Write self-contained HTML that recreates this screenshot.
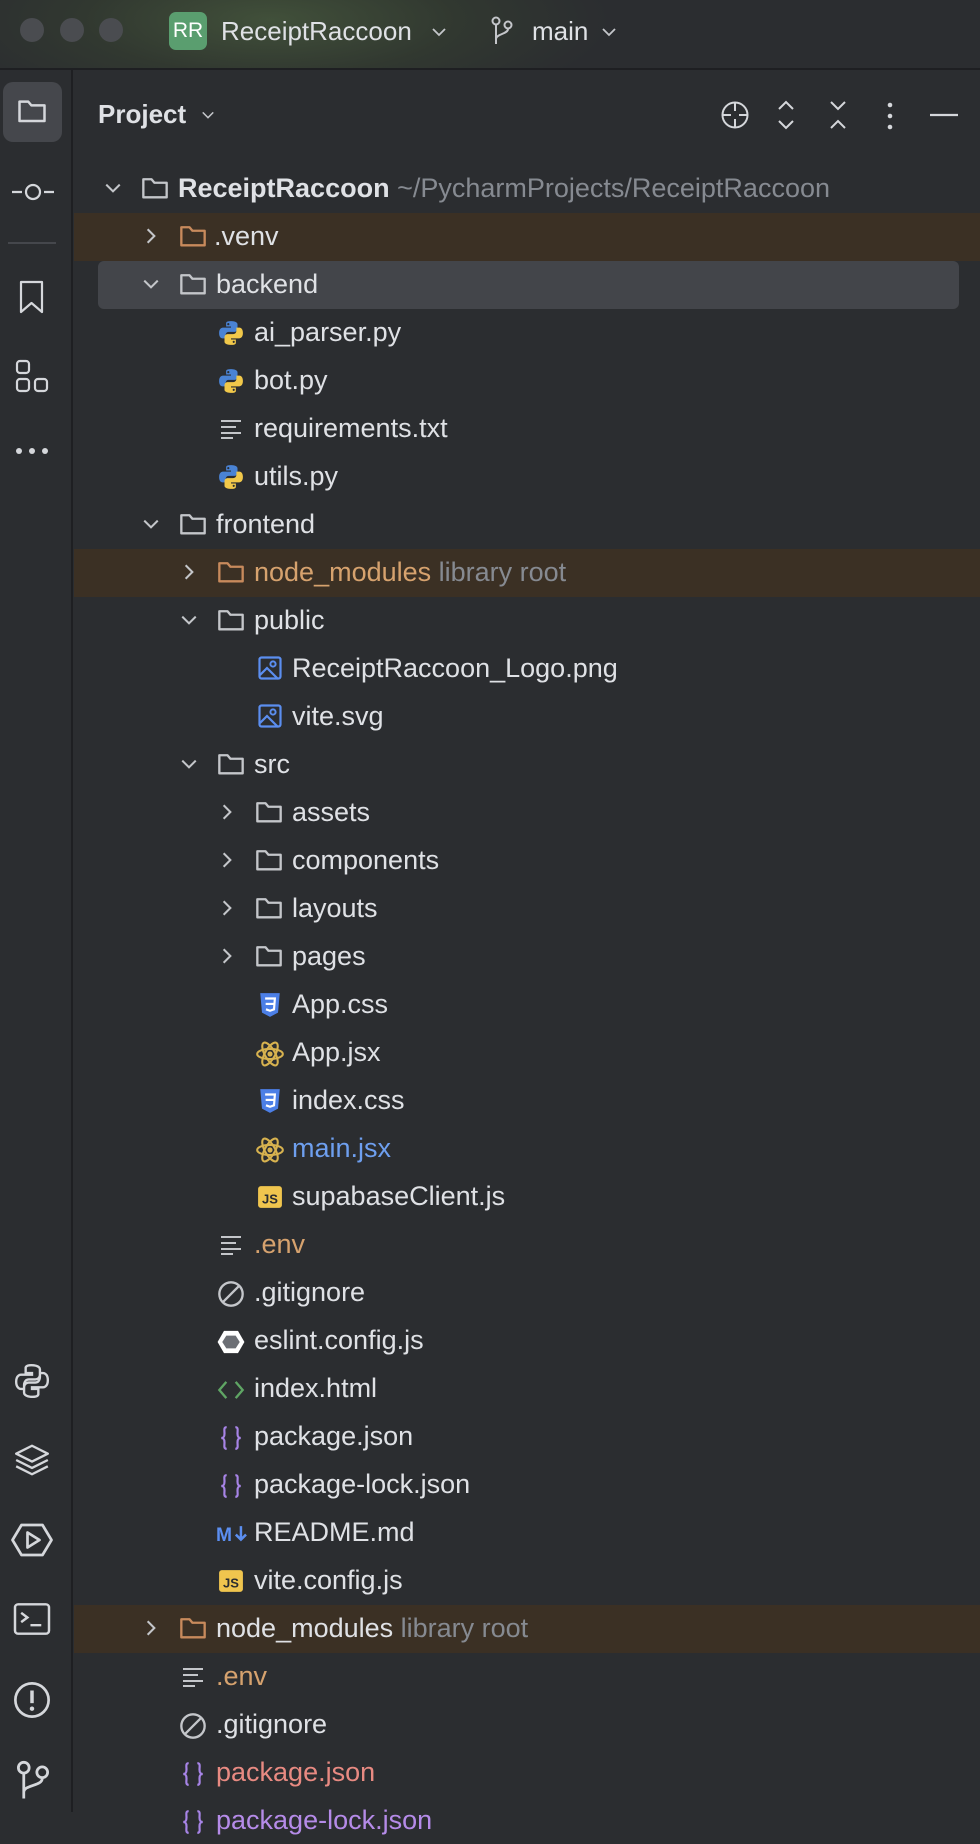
<!DOCTYPE html>
<html><head><meta charset="utf-8"><style>
*{margin:0;padding:0;box-sizing:border-box}
body{width:980px;height:1812px;background:#2b2d30;overflow:hidden;position:relative;font-family:"Liberation Sans",sans-serif;color:#dfe1e5}
.title{position:absolute;left:0;top:0;width:980px;height:70px;background:radial-gradient(ellipse 340px 100px at 270px 20px,#41503a 0%,#313830 55%,#2b2d30 100%);border-bottom:2px solid #1e1f22}
.tl{position:absolute;top:18px;width:24px;height:24px;border-radius:50%;background:#4a4c50}
.side{position:absolute;left:0;top:70px;width:73px;height:1742px;border-right:2px solid #1e1f22}
.abs{position:absolute}
.row{position:absolute;left:74px;width:906px;height:48px}
.brown{background:#3b3024}
.t{position:absolute;font-size:27px;line-height:48px;white-space:nowrap}
.g{color:#868a91}
svg{position:absolute;overflow:visible}
</style></head><body>
<svg width="0" height="0" style="position:absolute">
<defs>
<symbol id="fold" viewBox="0 0 24 20"><path d="M2 2.5h7l2.5 3H22v12.5H2z" fill="none" stroke="currentColor" stroke-width="2" stroke-linejoin="round"/></symbol>
<symbol id="chR" viewBox="0 0 16 16"><path d="M5 2l6 6-6 6" fill="none" stroke="#c4c6ca" stroke-width="1.8"/></symbol>
<symbol id="chD" viewBox="0 0 16 16"><path d="M2 5l6 6 6-6" fill="none" stroke="#c4c6ca" stroke-width="1.8"/></symbol>
<symbol id="py" viewBox="0 0 24 24"><path d="M11.5 1C7 1 7.5 3 7.5 3v3h4.5v1H5S1 6.6 1 12s3.5 5 3.5 5H7v-2.6S6.8 11 10 11h5s3 0 3-3V4s.5-3-6.5-3z" fill="#4a83d4"/><circle cx="9.5" cy="3.8" r="1" fill="#2b2d30"/><path d="M12.5 23c4.5 0 4-2 4-2v-3H12v-1h7s4 .4 4-5-3.5-5-3.5-5H17v2.6s.2 3.4-3 3.4H9s-3 0-3 3v4s-.5 3 6.5 3z" fill="#f1c84a"/><circle cx="14.5" cy="20.2" r="1" fill="#2b2d30"/></symbol>
<symbol id="txt" viewBox="0 0 24 24"><path d="M2 4h20M2 10h15M2 16h20M2 21h12" stroke="#c4c6ca" stroke-width="2"/></symbol>
<symbol id="img" viewBox="0 0 24 24"><rect x="1.5" y="1.5" width="21" height="21" rx="2" fill="none" stroke="#5b8ef0" stroke-width="2.2"/><circle cx="15" cy="8" r="2.6" fill="none" stroke="#5b8ef0" stroke-width="2"/><path d="M2 19l7-7 11 11" fill="none" stroke="#5b8ef0" stroke-width="2.2"/></symbol>
<symbol id="css" viewBox="0 0 24 24"><path d="M3 1h18l-1.6 18L12 23l-7.4-4z" fill="#4c7fe6"/><path d="M7.5 6h9l-.8 10L12 17.3 8.3 16" fill="none" stroke="#fff" stroke-width="2"/><path d="M8 11h7.5" stroke="#fff" stroke-width="2"/></symbol>
<symbol id="react" viewBox="0 0 24 24"><g fill="none" stroke="#d7b24f" stroke-width="1.8"><ellipse cx="12" cy="12" rx="11" ry="4.3"/><ellipse cx="12" cy="12" rx="11" ry="4.3" transform="rotate(60 12 12)"/><ellipse cx="12" cy="12" rx="11" ry="4.3" transform="rotate(120 12 12)"/></g><circle cx="12" cy="12" r="2.2" fill="#d7b24f"/></symbol>
<symbol id="js" viewBox="0 0 24 24"><rect x="1" y="2" width="22" height="20" rx="2.5" fill="#f0c54e"/><text x="12" y="18" font-family="Liberation Sans" font-size="12" font-weight="bold" fill="#2b2d30" text-anchor="middle">JS</text></symbol>
<symbol id="ign" viewBox="0 0 24 24"><circle cx="12" cy="12" r="10" fill="none" stroke="#c4c6ca" stroke-width="2"/><path d="M5 19L19 5" stroke="#c4c6ca" stroke-width="2"/></symbol>
<symbol id="esl" viewBox="0 0 24 24"><path d="M6 2.5h12l5.5 9.5-5.5 9.5H6L.5 12z" fill="#fff"/><path d="M8 6.5h8l3.5 5.5-3.5 5.5H8L4.5 12z" fill="#6c6f75"/></symbol>
<symbol id="html" viewBox="0 0 24 24"><path d="M8 5l-6 7 6 7M16 5l6 7-6 7" fill="none" stroke="#5fa564" stroke-width="2"/></symbol>
<symbol id="json" viewBox="0 0 24 24"><path d="M8 2C5 2 6 5 6 8s-1 4-3 4c2 0 3 1 3 4s-1 6 2 6M16 2c3 0 2 3 2 6s1 4 3 4c-2 0-3 1-3 4s1 6-2 6" fill="none" stroke="#a784e6" stroke-width="2"/></symbol>
<symbol id="md" viewBox="0 0 30 24"><text x="0" y="18" font-family="Liberation Sans" font-weight="bold" font-size="17" fill="#5b8ef0">M</text><path d="M22 5v12M17.5 12.5L22 17l4.5-4.5" fill="none" stroke="#5b8ef0" stroke-width="2.2"/></symbol>
</defs></svg>

<div class="title">
<div class="tl" style="left:20px"></div><div class="tl" style="left:60px"></div><div class="tl" style="left:99px"></div>
<div class="abs" style="left:169px;top:12px;width:38px;height:38px;border-radius:7px;background:#5a9e6f;color:#fff;font-size:21px;line-height:38px;text-align:center">RR</div>
<div class="abs" style="left:221px;top:14px;font-size:26px;line-height:34px;color:#dfe1e5">ReceiptRaccoon</div>
<svg style="left:431px;top:24px" width="16" height="16"><use href="#chD"/></svg>
<svg style="left:490px;top:16px" width="26" height="30" viewBox="0 0 26 30"><g fill="none" stroke="#c4c6ca" stroke-width="2"><circle cx="6" cy="5" r="3.5"/><circle cx="18" cy="9" r="3.5"/><path d="M6 9v19M18 13c0 5-12 5-12 10"/></g></svg>
<div class="abs" style="left:532px;top:14px;font-size:26px;line-height:34px">main</div>
<svg style="left:601px;top:24px" width="16" height="16"><use href="#chD"/></svg>
</div>

<div class="side">
<div class="abs" style="left:3px;top:12px;width:59px;height:60px;border-radius:10px;background:#45474c"></div>
<svg style="left:17px;top:28px" width="30" height="26"><use href="#fold" style="color:#d5d7db"/></svg>
<svg style="left:12px;top:112px" width="42" height="20"><path d="M0 10h10M32 10h10" stroke="#d5d7db" stroke-width="2.2"/><circle cx="21" cy="10" r="7" fill="none" stroke="#d5d7db" stroke-width="2.2"/></svg>
<div class="abs" style="left:8px;top:172px;width:48px;height:2px;background:#45474c"></div>
<svg style="left:19px;top:210px" width="26" height="34"><path d="M2 2h21v30l-10.5-9L2 32z" fill="none" stroke="#d5d7db" stroke-width="2.2" stroke-linejoin="round"/></svg>
<svg style="left:15px;top:289px" width="34" height="34"><g fill="none" stroke="#d5d7db" stroke-width="2.2"><rect x="2" y="2" width="12" height="12" rx="3"/><rect x="2" y="20" width="12" height="12" rx="3"/><rect x="20" y="20" width="12" height="12" rx="3"/></g></svg>
<svg style="left:15px;top:376px" width="34" height="10"><g fill="#d5d7db"><circle cx="4" cy="5" r="3"/><circle cx="17" cy="5" r="3"/><circle cx="30" cy="5" r="3"/></g></svg>
<svg style="left:13px;top:1292px" width="38" height="38" viewBox="0 0 24 24"><path d="M11.5 2C7.5 2 8 4 8 4v3h4v1H5S2 8 2 12.5 5 17 5 17h2v-2.5S7 11 10 11h4s3 0 3-3V4.5S17 2 11.5 2zM12.5 22c4 0 3.5-2 3.5-2v-3h-4v-1h7s3 0 3-4.5S19 7 19 7h-2v2.5S17 13 14 13h-4s-3 0-3 3v3.5S7 22 12.5 22z" fill="none" stroke="#d5d7db" stroke-width="1.5"/></svg>
<svg style="left:13px;top:1372px" width="38" height="36" viewBox="0 0 24 22"><g fill="none" stroke="#d5d7db" stroke-width="1.5" stroke-linejoin="round"><path d="M12 2L2 7l10 5 10-5z"/><path d="M2 11l10 5 10-5M2 15l10 5 10-5"/></g></svg>
<svg style="left:11px;top:1452px" width="42" height="36" viewBox="0 0 28 24"><path d="M7 2h14l6 10-6 10H7L1 12z" fill="none" stroke="#d5d7db" stroke-width="1.8" stroke-linejoin="round"/><path d="M11 7v10l8-5z" fill="none" stroke="#d5d7db" stroke-width="1.8" stroke-linejoin="round"/></svg>
<svg style="left:13px;top:1532px" width="38" height="34" viewBox="0 0 24 22"><rect x="1" y="1.5" width="22" height="19" rx="2" fill="none" stroke="#d5d7db" stroke-width="1.6"/><path d="M5 7l4 3-4 3M11 15h7" fill="none" stroke="#d5d7db" stroke-width="1.6"/></svg>
<svg style="left:13px;top:1611px" width="38" height="38" viewBox="0 0 24 24"><circle cx="12" cy="12" r="10.5" fill="none" stroke="#d5d7db" stroke-width="1.7"/><path d="M12 6v8" stroke="#d5d7db" stroke-width="2.2"/><circle cx="12" cy="17.5" r="1.4" fill="#d5d7db"/></svg>
<svg style="left:15px;top:1690px" width="36" height="40" viewBox="0 0 22 26"><g fill="none" stroke="#d5d7db" stroke-width="1.8"><circle cx="5" cy="5" r="3.5"/><circle cx="17" cy="8" r="3.5"/><path d="M5 9v16M17 12c0 5-12 4-12 9"/></g></svg>
</div>

<div class="abs" style="left:98px;top:96px;font-size:26px;font-weight:bold;line-height:36px">Project</div>
<svg style="left:201px;top:108px" width="14" height="14"><use href="#chD"/></svg>
<svg style="left:720px;top:100px" width="30" height="30" viewBox="0 0 30 30"><g fill="none" stroke="#d5d7db" stroke-width="2"><circle cx="15" cy="15" r="12.5"/><path d="M15 2v9M15 19v9M2 15h9M19 15h9"/></g></svg>
<svg style="left:776px;top:99px" width="20" height="32"><path d="M3 10l7-7 7 7M3 22l7 7 7-7" fill="none" stroke="#d5d7db" stroke-width="2"/></svg>
<svg style="left:828px;top:99px" width="20" height="32"><path d="M3 3l7 7 7-7M3 29l7-7 7 7" fill="none" stroke="#d5d7db" stroke-width="2"/></svg>
<svg style="left:886px;top:101px" width="8" height="30"><g fill="#d5d7db"><circle cx="4" cy="4" r="2.3"/><circle cx="4" cy="15" r="2.3"/><circle cx="4" cy="26" r="2.3"/></g></svg>
<svg style="left:930px;top:113px" width="28" height="4"><path d="M0 2h28" stroke="#d5d7db" stroke-width="2.2"/></svg>

<div class="row brown" style="top:213px"></div>
<div class="abs" style="left:98px;top:261px;width:861px;height:48px;border-radius:6px;background:#43454a"></div>
<div class="row brown" style="top:549px"></div>
<div class="row brown" style="top:1605px"></div>

<svg style="left:104px;top:179px" width="18" height="18"><use href="#chD"/></svg>
<svg style="left:141px;top:175px" width="28" height="26"><use href="#fold" style="color:#c4c6ca"/></svg>
<div class="t" style="left:178px;top:164px;font-weight:bold">ReceiptRaccoon <span class="g" style="font-weight:normal">~/PycharmProjects/ReceiptRaccoon</span></div>
<svg style="left:142px;top:227px" width="18" height="18"><use href="#chR"/></svg>
<svg style="left:179px;top:223px" width="28" height="26"><use href="#fold" style="color:#c88a5c"/></svg>
<div class="t" style="left:214px;top:212px">.venv</div>
<svg style="left:142px;top:275px" width="18" height="18"><use href="#chD"/></svg>
<svg style="left:179px;top:271px" width="28" height="26"><use href="#fold" style="color:#c4c6ca"/></svg>
<div class="t" style="left:216px;top:260px">backend</div>
<svg style="left:218px;top:320px" width="26" height="26"><use href="#py"/></svg>
<div class="t" style="left:254px;top:308px">ai_parser.py</div>
<svg style="left:218px;top:368px" width="26" height="26"><use href="#py"/></svg>
<div class="t" style="left:254px;top:356px">bot.py</div>
<svg style="left:219px;top:417px" width="24" height="24"><use href="#txt"/></svg>
<div class="t" style="left:254px;top:404px">requirements.txt</div>
<svg style="left:218px;top:464px" width="26" height="26"><use href="#py"/></svg>
<div class="t" style="left:254px;top:452px">utils.py</div>
<svg style="left:142px;top:515px" width="18" height="18"><use href="#chD"/></svg>
<svg style="left:179px;top:511px" width="28" height="26"><use href="#fold" style="color:#c4c6ca"/></svg>
<div class="t" style="left:216px;top:500px">frontend</div>
<svg style="left:180px;top:563px" width="18" height="18"><use href="#chR"/></svg>
<svg style="left:217px;top:559px" width="28" height="26"><use href="#fold" style="color:#c88a5c"/></svg>
<div class="t" style="left:254px;top:548px;color:#d6a26e">node_modules <span class="g">library root</span></div>
<svg style="left:180px;top:611px" width="18" height="18"><use href="#chD"/></svg>
<svg style="left:217px;top:607px" width="28" height="26"><use href="#fold" style="color:#c4c6ca"/></svg>
<div class="t" style="left:254px;top:596px">public</div>
<svg style="left:258px;top:656px" width="24" height="24"><use href="#img"/></svg>
<div class="t" style="left:292px;top:644px">ReceiptRaccoon_Logo.png</div>
<svg style="left:258px;top:704px" width="24" height="24"><use href="#img"/></svg>
<div class="t" style="left:292px;top:692px">vite.svg</div>
<svg style="left:180px;top:755px" width="18" height="18"><use href="#chD"/></svg>
<svg style="left:217px;top:751px" width="28" height="26"><use href="#fold" style="color:#c4c6ca"/></svg>
<div class="t" style="left:254px;top:740px">src</div>
<svg style="left:218px;top:803px" width="18" height="18"><use href="#chR"/></svg>
<svg style="left:255px;top:799px" width="28" height="26"><use href="#fold" style="color:#c4c6ca"/></svg>
<div class="t" style="left:292px;top:788px">assets</div>
<svg style="left:218px;top:851px" width="18" height="18"><use href="#chR"/></svg>
<svg style="left:255px;top:847px" width="28" height="26"><use href="#fold" style="color:#c4c6ca"/></svg>
<div class="t" style="left:292px;top:836px">components</div>
<svg style="left:218px;top:899px" width="18" height="18"><use href="#chR"/></svg>
<svg style="left:255px;top:895px" width="28" height="26"><use href="#fold" style="color:#c4c6ca"/></svg>
<div class="t" style="left:292px;top:884px">layouts</div>
<svg style="left:218px;top:947px" width="18" height="18"><use href="#chR"/></svg>
<svg style="left:255px;top:943px" width="28" height="26"><use href="#fold" style="color:#c4c6ca"/></svg>
<div class="t" style="left:292px;top:932px">pages</div>
<svg style="left:257px;top:992px" width="26" height="26"><use href="#css"/></svg>
<div class="t" style="left:292px;top:980px">App.css</div>
<svg style="left:256px;top:1040px" width="28" height="28"><use href="#react"/></svg>
<div class="t" style="left:292px;top:1028px">App.jsx</div>
<svg style="left:257px;top:1088px" width="26" height="26"><use href="#css"/></svg>
<div class="t" style="left:292px;top:1076px">index.css</div>
<svg style="left:256px;top:1136px" width="28" height="28"><use href="#react"/></svg>
<div class="t" style="left:292px;top:1124px;color:#6e9fef">main.jsx</div>
<svg style="left:257px;top:1184px" width="26" height="26"><use href="#js"/></svg>
<div class="t" style="left:292px;top:1172px">supabaseClient.js</div>
<svg style="left:219px;top:1233px" width="24" height="24"><use href="#txt"/></svg>
<div class="t" style="left:254px;top:1220px;color:#d6a26e">.env</div>
<svg style="left:217px;top:1280px" width="28" height="28"><use href="#ign"/></svg>
<div class="t" style="left:254px;top:1268px">.gitignore</div>
<svg style="left:217px;top:1328px" width="28" height="28"><use href="#esl"/></svg>
<div class="t" style="left:254px;top:1316px">eslint.config.js</div>
<svg style="left:217px;top:1376px" width="28" height="28"><use href="#html"/></svg>
<div class="t" style="left:254px;top:1364px">index.html</div>
<svg style="left:218px;top:1424px" width="26" height="28"><use href="#json"/></svg>
<div class="t" style="left:254px;top:1412px">package.json</div>
<svg style="left:218px;top:1472px" width="26" height="28"><use href="#json"/></svg>
<div class="t" style="left:254px;top:1460px">package-lock.json</div>
<svg style="left:216px;top:1520px" width="34" height="28"><use href="#md"/></svg>
<div class="t" style="left:254px;top:1508px">README.md</div>
<svg style="left:218px;top:1568px" width="26" height="26"><use href="#js"/></svg>
<div class="t" style="left:254px;top:1556px">vite.config.js</div>
<svg style="left:142px;top:1619px" width="18" height="18"><use href="#chR"/></svg>
<svg style="left:179px;top:1615px" width="28" height="26"><use href="#fold" style="color:#c88a5c"/></svg>
<div class="t" style="left:216px;top:1604px">node_modules <span class="g">library root</span></div>
<svg style="left:181px;top:1665px" width="24" height="24"><use href="#txt"/></svg>
<div class="t" style="left:216px;top:1652px;color:#d6a26e">.env</div>
<svg style="left:179px;top:1712px" width="28" height="28"><use href="#ign"/></svg>
<div class="t" style="left:216px;top:1700px">.gitignore</div>
<svg style="left:180px;top:1760px" width="26" height="28"><use href="#json"/></svg>
<div class="t" style="left:216px;top:1748px;color:#e88a82">package.json</div>
<svg style="left:180px;top:1808px" width="26" height="28"><use href="#json"/></svg>
<div class="t" style="left:216px;top:1796px;color:#b58be8">package-lock.json</div>
</body></html>
